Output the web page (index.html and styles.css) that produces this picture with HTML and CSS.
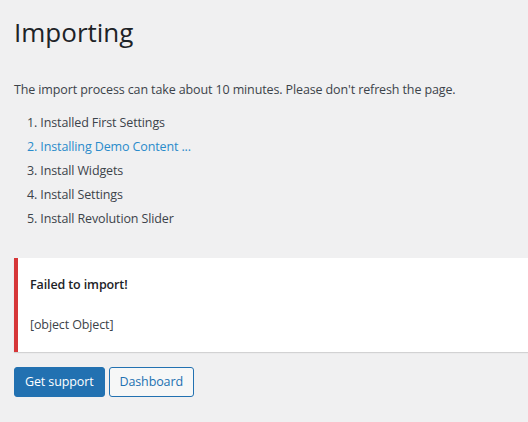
FILE: index.html
```html
<!DOCTYPE html>
<html lang="en">
<head>
<meta charset="utf-8">
<title>Importing</title>
<link rel="stylesheet" href="styles.css">
</head>
<body>
<div class="wrap">
  <h1 class="title">Importing</h1>
  <p class="intro">The import process can take about 10 minutes. Please don't refresh the page.</p>
  <ol class="steps">
    <li class="step done">Installed First Settings</li>
    <li class="step active">Installing Demo Content ...</li>
    <li class="step">Install Widgets</li>
    <li class="step">Install Settings</li>
    <li class="step">Install Revolution Slider</li>
  </ol>
  <div class="notice notice-error">
    <p class="notice-title">Failed to import!</p>
    <p class="notice-msg">[object Object]</p>
  </div>
  <div class="actions">
    <a class="button button-primary" href="#">Get support</a>
    <a class="button button-secondary" href="#">Dashboard</a>
  </div>
</div>
</body>
</html>
```

FILE: styles.css
```css
html, body {
  margin: 0;
  padding: 0;
  background: #f0f0f1;
}
body {
  font-family: "Open Sans", "Noto Sans", sans-serif;
  font-size: 12.5px;
  letter-spacing: -0.12px;
  line-height: 1.4;
  color: #3c434a;
  overflow: hidden;
}
.wrap {
  padding: 13px 0 0 14px;
}
.title {
  margin: 0;
  font-size: 26px;
  letter-spacing: 0;
  font-weight: 400;
  line-height: 38px;
  color: #1d2327;
}
.intro {
  margin: 29px 0 0;
  line-height: 20px;
}
.steps {
  margin: 11px 0 0;
  padding: 0 0 0 13px;
  list-style: none;
  counter-reset: step;
}
.step {
  line-height: 24px;
  counter-increment: step;
}
.step::before {
  content: counter(step) ". ";
}
.step.active {
  color: #2a8bcb;
}
.notice {
  margin: 27px 0 0;
  background: #fff;
  border-left: 4px solid #d63638;
  box-shadow: 0 1px 1px rgba(0, 0, 0, 0.12);
  padding: 17px 12px;
}
.notice p {
  margin: 0;
  line-height: 20px;
}
.notice-title {
  font-weight: 600;
  color: #1d2327;
}
.notice-msg {
  margin-top: 20px !important;
}
.actions {
  display: flex;
  gap: 4px;
  margin-top: 15px;
}
.button {
  display: inline-flex;
  align-items: center;
  height: 30px;
  box-sizing: border-box;
  padding: 0 10px;
  border-radius: 3px;
  border: 1px solid #2271b1;
  font-size: 12.5px;
  text-decoration: none;
}
.button-primary {
  background: #2271b1;
  color: #fff;
}
.button-secondary {
  background: #f6f7f7;
  color: #2271b1;
}
```
